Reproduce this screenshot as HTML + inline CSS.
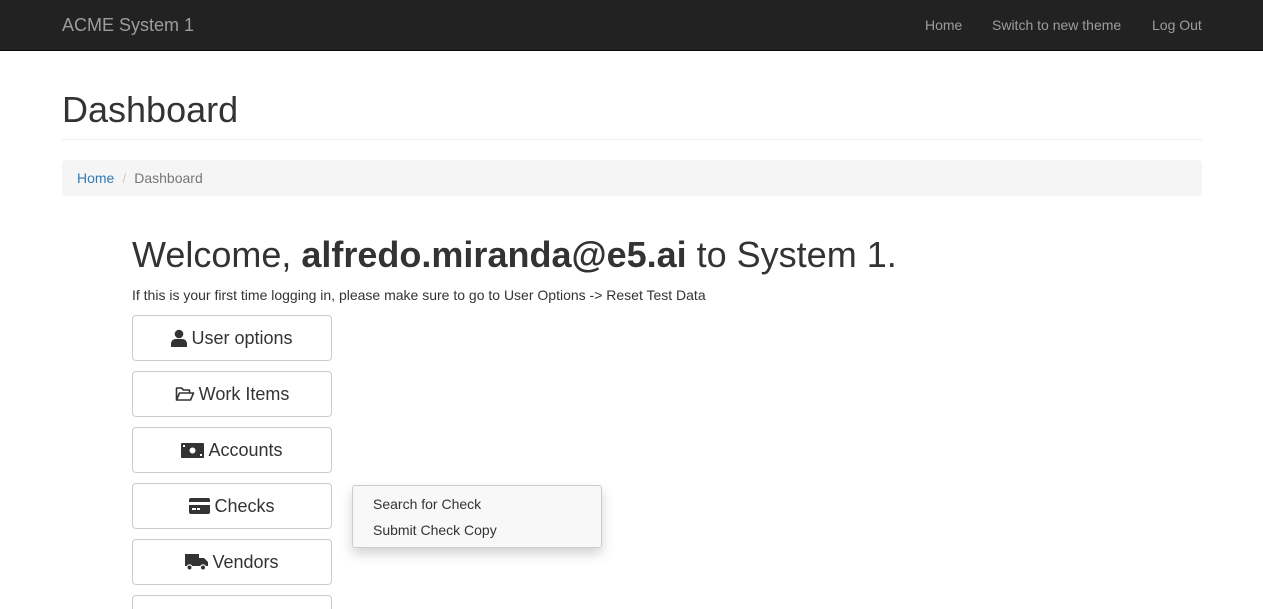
<!DOCTYPE html>
<html style="width:1263px;height:609px;overflow:hidden"><head><meta charset="utf-8"><style>
*{box-sizing:border-box;margin:0;padding:0}
body{width:1263px;height:609px;overflow:hidden;font-family:"Liberation Sans",sans-serif;color:#333;background:#fff;position:relative;font-size:14px}
.nav{position:absolute;left:0;top:0;width:1263px;height:51px;background:#222;border-bottom:1px solid #080808}
.nav .brand{position:absolute;left:62px;top:15px;font-size:18px;color:#9d9d9d}
.nav a{position:absolute;top:17px;font-size:14px;color:#9d9d9d}
h1{position:absolute;left:62px;top:89px;font-size:36px;font-weight:400;color:#333}
.hr{position:absolute;left:62px;top:139px;width:1140px;border-top:1px solid #eee}
.bc{position:absolute;left:62px;top:160px;width:1140px;height:36px;background:#f5f5f5;border-radius:4px;padding:10px 15px;font-size:14px}
.bc a{color:#337ab7}.bc .s{color:#ccc;padding:0 8px}.bc .c{color:#777}
.wel{position:absolute;left:132px;top:234px;font-size:36px;font-weight:400}
.p{position:absolute;left:132px;top:287px;font-size:14px}
.btn{position:absolute;left:132px;width:200px;height:46px;border:1px solid #ccc;border-radius:4px;background:#fff;font-size:18px;display:flex;align-items:center;justify-content:center;gap:4px}
.btn svg{fill:#333}
.dd{position:absolute;left:352px;top:485px;width:250px;height:63px;background:#f8f8f8;border:1px solid #ccc;border-radius:3px;box-shadow:0 6px 12px rgba(0,0,0,.175);font-size:14px;padding-top:9px}
.dd div{padding:0 20px;height:26px;line-height:18px}
</style></head><body>
<div class="nav"><span class="brand">ACME System 1</span>
<a style="left:925px">Home</a><a style="left:992px">Switch to new theme</a><a style="left:1152px">Log Out</a></div>
<h1>Dashboard</h1><div class="hr"></div>
<div class="bc"><a>Home</a><span class="s">/</span><span class="c">Dashboard</span></div>
<div class="wel">Welcome, <b>alfredo.miranda@e5.ai</b> to System 1.</div>
<div class="p">If this is your first time logging in, please make sure to go to User Options -&gt; Reset Test Data</div>
<div class="btn" style="top:315px"><svg width="16" height="18" viewBox="0 0 16 18"><circle cx="8" cy="5" r="4.3"/><path d="M0 18v-3c0-3 2-5 5-5h6c3 0 5 2 5 5v3z"/></svg>User options</div>
<div class="btn" style="top:371px"><svg width="20" height="16" viewBox="0 0 20 16"><path d="M1.5 14V2h5l2 2h6v3M1.5 14l3-7h14l-3 7z" fill="none" stroke="#333" stroke-width="1.6" stroke-linejoin="round"/></svg>Work Items</div>
<div class="btn" style="top:427px"><svg width="23" height="15" viewBox="0 0 23 15"><rect width="23" height="15" rx="1"/><circle cx="11.5" cy="7.5" r="3" fill="#fff"/><rect x="2" y="2" width="2" height="2" fill="#fff"/><rect x="19" y="11" width="2" height="2" fill="#fff"/></svg>Accounts</div>
<div class="btn" style="top:483px"><svg width="21" height="16" viewBox="0 0 21 16"><rect width="21" height="16" rx="2"/><rect x="0" y="4" width="21" height="3" fill="#fff"/><rect x="3" y="10" width="4" height="2" fill="#fff"/><rect x="8" y="10" width="3" height="2" fill="#fff"/></svg>Checks</div>
<div class="btn" style="top:539px"><svg width="23" height="18" viewBox="0 0 23 18"><path d="M0 1h14v12H0zM14 5h5l4 4v4h-9z"/><circle cx="4.5" cy="14.5" r="2.6" stroke="#fff" stroke-width="1.2"/><circle cx="18" cy="14.5" r="2.6" stroke="#fff" stroke-width="1.2"/></svg>Vendors</div>
<div class="btn" style="top:595px;height:14px;border-bottom:none;border-radius:4px 4px 0 0"></div>
<div class="dd"><div>Search for Check</div><div>Submit Check Copy</div></div>
</body></html>
